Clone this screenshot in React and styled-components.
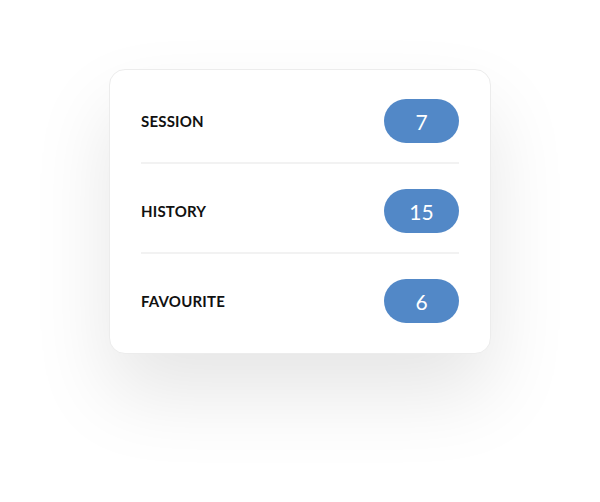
import React from "react";
import styled, { createGlobalStyle } from "styled-components";

const GlobalStyle = createGlobalStyle`
	body {
		margin: 0;
		background: #fff;
		font-family: "Lato", "Open Sans", sans-serif;
	}
`;

const items = [
	{ label: "SESSION", count: 7 },
	{ label: "HISTORY", count: 15 },
	{ label: "FAVOURITE", count: 6 },
];

function App() {
	return (
		<>
			<GlobalStyle />
			<Page>
				<Card>
					{items.map((item, i) => (
						<Row key={item.label} last={i === items.length - 1}>
							<Label>{item.label}</Label>
							<Pill>{item.count}</Pill>
						</Row>
					))}
				</Card>
			</Page>
		</>
	);
}

const Page = styled.div`
	display: flex;
	justify-content: center;
	padding-top: 69px;
	height: 502px;
	box-sizing: border-box;
`;

const Card = styled.div`
	width: 382px;
	height: 285px;
	box-sizing: border-box;
	padding: 4px 31px 10px;
	background: #fff;
	border: 1px solid #ececec;
	border-radius: 16px;
	box-shadow: 0 40px 80px rgba(0, 0, 0, 0.1);
	display: flex;
	flex-direction: column;
`;

const Row = styled.div`
	display: flex;
	align-items: center;
	justify-content: space-between;
	padding: 25px 0 19px;
	border-bottom: ${(p) => (p.last ? "none" : "2px solid #f2f2f2")};
`;

const Label = styled.span`
	color: #111;
	font-size: 15px;
	font-weight: 700;
	letter-spacing: 0.2px;
`;

const Pill = styled.div`
	width: 75px;
	height: 44px;
	border-radius: 22px;
	background: #5288c7;
	color: #fff;
	font-size: 21px;
	font-weight: 400;
	display: flex;
	align-items: center;
	justify-content: center;
`;

export default App;
